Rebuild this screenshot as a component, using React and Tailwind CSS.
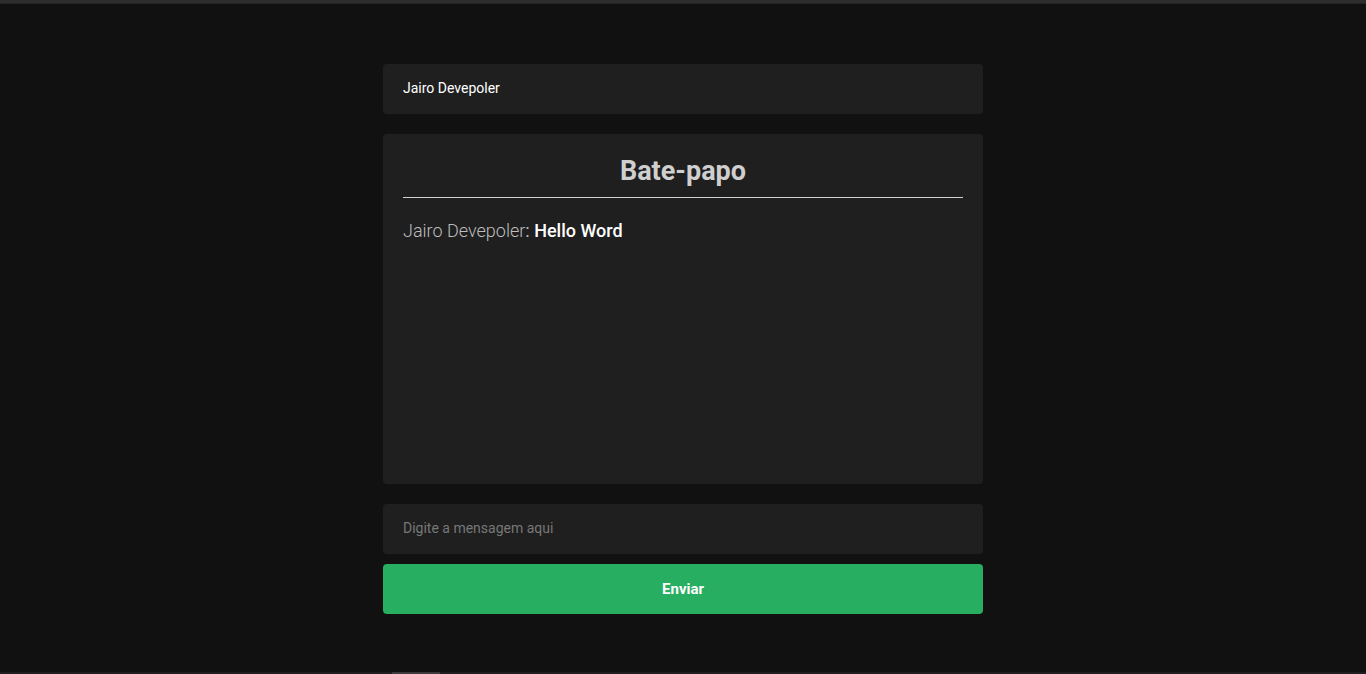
import React, { useState } from 'react';

function App() {
  const [message, setMessage] = useState('');
  const [messages, setMessages] = useState([
    { author: 'Jairo Devepoler', text: 'Hello Word' },
  ]);
  const username = 'Jairo Devepoler';

  const handleSend = () => {
    if (!message.trim()) return;
    setMessages([...messages, { author: username, text: message }]);
    setMessage('');
  };

  return (
    <div className="h-[674px] bg-[#111111] flex flex-col overflow-hidden font-['Roboto',sans-serif]">
      {/* top strip */}
      <div className="h-[4px] bg-[#2e2e2e] border-b border-[#232323] shrink-0"></div>

      <div className="flex flex-col items-center pt-[60px]">
        <div className="w-[600px] flex flex-col">
          {/* Username */}
          <div className="h-[50px] bg-[#1f1f1f] rounded-[4px] flex items-center px-5 pb-[2px] text-[14px] text-white">
            {username}
          </div>

          {/* Chat box */}
          <div className="h-[350px] mt-5 bg-[#1f1f1f] rounded-[4px] px-5 pt-[18px] overflow-y-auto">
            <h2 className="text-[27px] font-bold text-[#cfcfcf] text-center leading-[38px] pb-[7px] border-b border-[#d0d0d0]">
              Bate-papo
            </h2>
            <div className="mt-[20px] flex flex-col gap-2">
              {messages.map((m, i) => (
                <p key={i} className="text-[18px] leading-[25px]">
                  <span className="font-light text-[#bdbdbd]">{m.author}</span>
                  <span className="text-[#bdbdbd]">: </span>
                  <span className="font-medium text-white">{m.text}</span>
                </p>
              ))}
            </div>
          </div>

          {/* Input */}
          <input
            type="text"
            autoFocus
            value={message}
            onChange={(e) => setMessage(e.target.value)}
            placeholder="Digite a mensagem aqui"
            className="h-[50px] mt-5 bg-[#1f1f1f] rounded-[4px] px-5 pb-[2px] text-[14px] text-white caret-white placeholder-[#777777] focus:outline-none"
          />

          {/* Send button */}
          <button
            onClick={handleSend}
            className="h-[50px] mt-[10px] bg-[#27ae60] rounded-[4px] text-[15px] font-bold text-white"
          >
            Enviar
          </button>
        </div>
      </div>

      <div className="flex-1"></div>
      {/* bottom scrollbar strip */}
      <div className="h-[2px] bg-[#1e1e1e] shrink-0 flex">
        <div className="ml-[392px] w-[48px] bg-[#3a3a3a]"></div>
      </div>
    </div>
  );
}

export default App;
